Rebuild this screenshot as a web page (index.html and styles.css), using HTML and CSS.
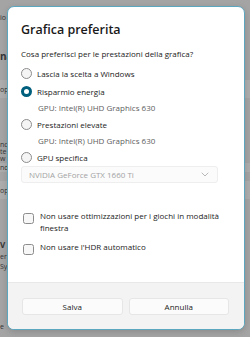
FILE: index.html
```html
<!DOCTYPE html>
<html lang="it">
<head>
<meta charset="utf-8">
<link rel="stylesheet" href="styles.css">
</head>
<body>
<div class="backdrop">
  <div class="frag f1">io</div>
  <div class="frag big f2">na</div>
  <div class="band b3"><span class="frag-in">op</span></div>
  <div class="frag multi f4">nc
te
w</div>
  <div class="band b7"><span class="frag-in">nd</span></div>
  <div class="band b8"><span class="frag-in">op</span></div>
  <div class="frag bold f9">V</div>
  <div class="frag f10">er</div>
  <div class="frag f11">Sy</div>
  <div class="frag f12">e</div>
</div>

<div class="dialog">
  <div class="dialog-body">
    <h1 class="title">Grafica preferita</h1>
    <p class="subtitle">Cosa preferisci per le prestazioni della grafica?</p>

    <div class="options">
      <label class="radio-row">
        <span class="radio"></span>
        <span class="label">Lascia la scelta a Windows</span>
      </label>
      <label class="radio-row">
        <span class="radio checked"></span>
        <span class="label">Risparmio energia</span>
      </label>
      <div class="gpu-line">GPU: Intel(R) UHD Graphics 630</div>
      <label class="radio-row">
        <span class="radio"></span>
        <span class="label">Prestazioni elevate</span>
      </label>
      <div class="gpu-line">GPU: Intel(R) UHD Graphics 630</div>
      <label class="radio-row">
        <span class="radio"></span>
        <span class="label">GPU specifica</span>
      </label>
      <div class="select">
        <span class="select-text">NVIDIA GeForce GTX 1660 Ti</span>
        <svg class="chevron" width="8" height="5" viewBox="0 0 8 5"><path d="M1 1 L4 4 L7 1" fill="none" stroke="#b0b0b0" stroke-width="0.9" stroke-linecap="round" stroke-linejoin="round"/></svg>
      </div>
    </div>

    <div class="checks">
      <label class="check-row">
        <span class="checkbox"></span>
        <span class="label">Non usare ottimizzazioni per i giochi in modalità finestra</span>
      </label>
      <label class="check-row">
        <span class="checkbox"></span>
        <span class="label">Non usare l'HDR automatico</span>
      </label>
    </div>
  </div>
  <div class="dialog-footer">
    <button class="btn">Salva</button>
    <button class="btn">Annulla</button>
  </div>
</div>
</body>
</html>
```
FILE: styles.css
```css
* { box-sizing: border-box; }
html, body { margin: 0; padding: 0; }
body {
  width: 250px;
  height: 337px;
  overflow: hidden;
  background: #a4a4a4;
  font-family: "Open Sans", "Noto Sans", sans-serif;
  position: relative;
  color: #1b1b1b;
}

.backdrop {
  position: relative;
  width: 250px;
  height: 337px;
  color: #343434;
  font-size: 7px;
  line-height: 7px;
}
.frag { position: absolute; left: 0; white-space: nowrap; }
.multi { white-space: pre-line; }
.big { font-size: 10px; line-height: 10px; font-weight: 700; }
.bold { font-weight: 700; font-size: 8px; line-height: 8px; }
.band {
  position: absolute;
  left: 0;
  width: 250px;
  background: #adadad;
  display: flex;
  align-items: center;
}
.frag-in { white-space: nowrap; }
.f1 { top: 14px; }
.f2 { top: 51px; }
.b3 { top: 80px; height: 18px; }
.f4 { top: 141px; }
.b7 { top: 163px; height: 9px; }
.b8 { top: 181px; height: 18px; }
.f9 { top: 241px; }
.f10 { top: 253px; }
.f11 { top: 263px; }
.f12 { top: 323px; }

.dialog {
  position: absolute;
  left: 7px;
  top: 6px;
  width: 238px;
  height: 324px;
  border: 1px solid #5ca6c0;
  border-radius: 7px;
  background: #ffffff;
  display: flex;
  flex-direction: column;
  overflow: hidden;
  box-shadow: 0 2px 6px rgba(0,0,0,0.15);
}

.dialog-body {
  flex: 1;
  padding: 15px 13px 0 13px;
}

.title {
  margin: 0;
  font-size: 12.5px;
  font-weight: 600;
  line-height: 16px;
  color: #1a1a1a;
}

.subtitle {
  margin: 10px 0 0 0;
  font-size: 8px;
  line-height: 12px;
}

.options { margin-top: 4px; }

.radio-row {
  display: flex;
  align-items: center;
  height: 18px;
  font-size: 8px;
}
.radio {
  width: 11px;
  height: 11px;
  border-radius: 50%;
  border: 1px solid #8c8c8c;
  background: #f5f5f5;
  margin-right: 5px;
  flex: none;
}
.radio.checked {
  border: 3.5px solid #005f7d;
  background: #fff;
}
.gpu-line {
  font-size: 8px;
  line-height: 15px;
  height: 15px;
  padding-left: 17px;
  color: #606060;
}

.select {
  width: 197px;
  height: 17px;
  border: 1px solid #eeeeee;
  border-radius: 3px;
  background: #fbfbfb;
  display: flex;
  align-items: center;
  justify-content: space-between;
  padding: 0 8px 0 7px;
}
.select-text { font-size: 8px; color: #a3a3a3; }
.chevron { display: block; }

.checks { margin-top: 27px; }
.check-row {
  display: flex;
  align-items: flex-start;
  font-size: 8px;
  line-height: 11.5px;
  padding-left: 2px;
  width: 200px;
  margin-bottom: 8px;
}
.checkbox {
  width: 11px;
  height: 11px;
  border: 1px solid #8c8c8c;
  border-radius: 2.5px;
  background: #f7f7f7;
  margin-top: 3px;
  margin-right: 6px;
  flex: none;
}

.dialog-footer {
  background: #f3f3f3;
  border-top: 1px solid #e8e8e8;
  padding: 15px 15px 14px 14px;
  display: flex;
  gap: 6px;
}
.btn {
  flex: 1;
  height: 17px;
  border: 1px solid #e6e6e6;
  border-radius: 3px;
  background: #fbfbfb;
  font-family: inherit;
  font-size: 8px;
  color: #1b1b1b;
  padding: 0;
}
```
